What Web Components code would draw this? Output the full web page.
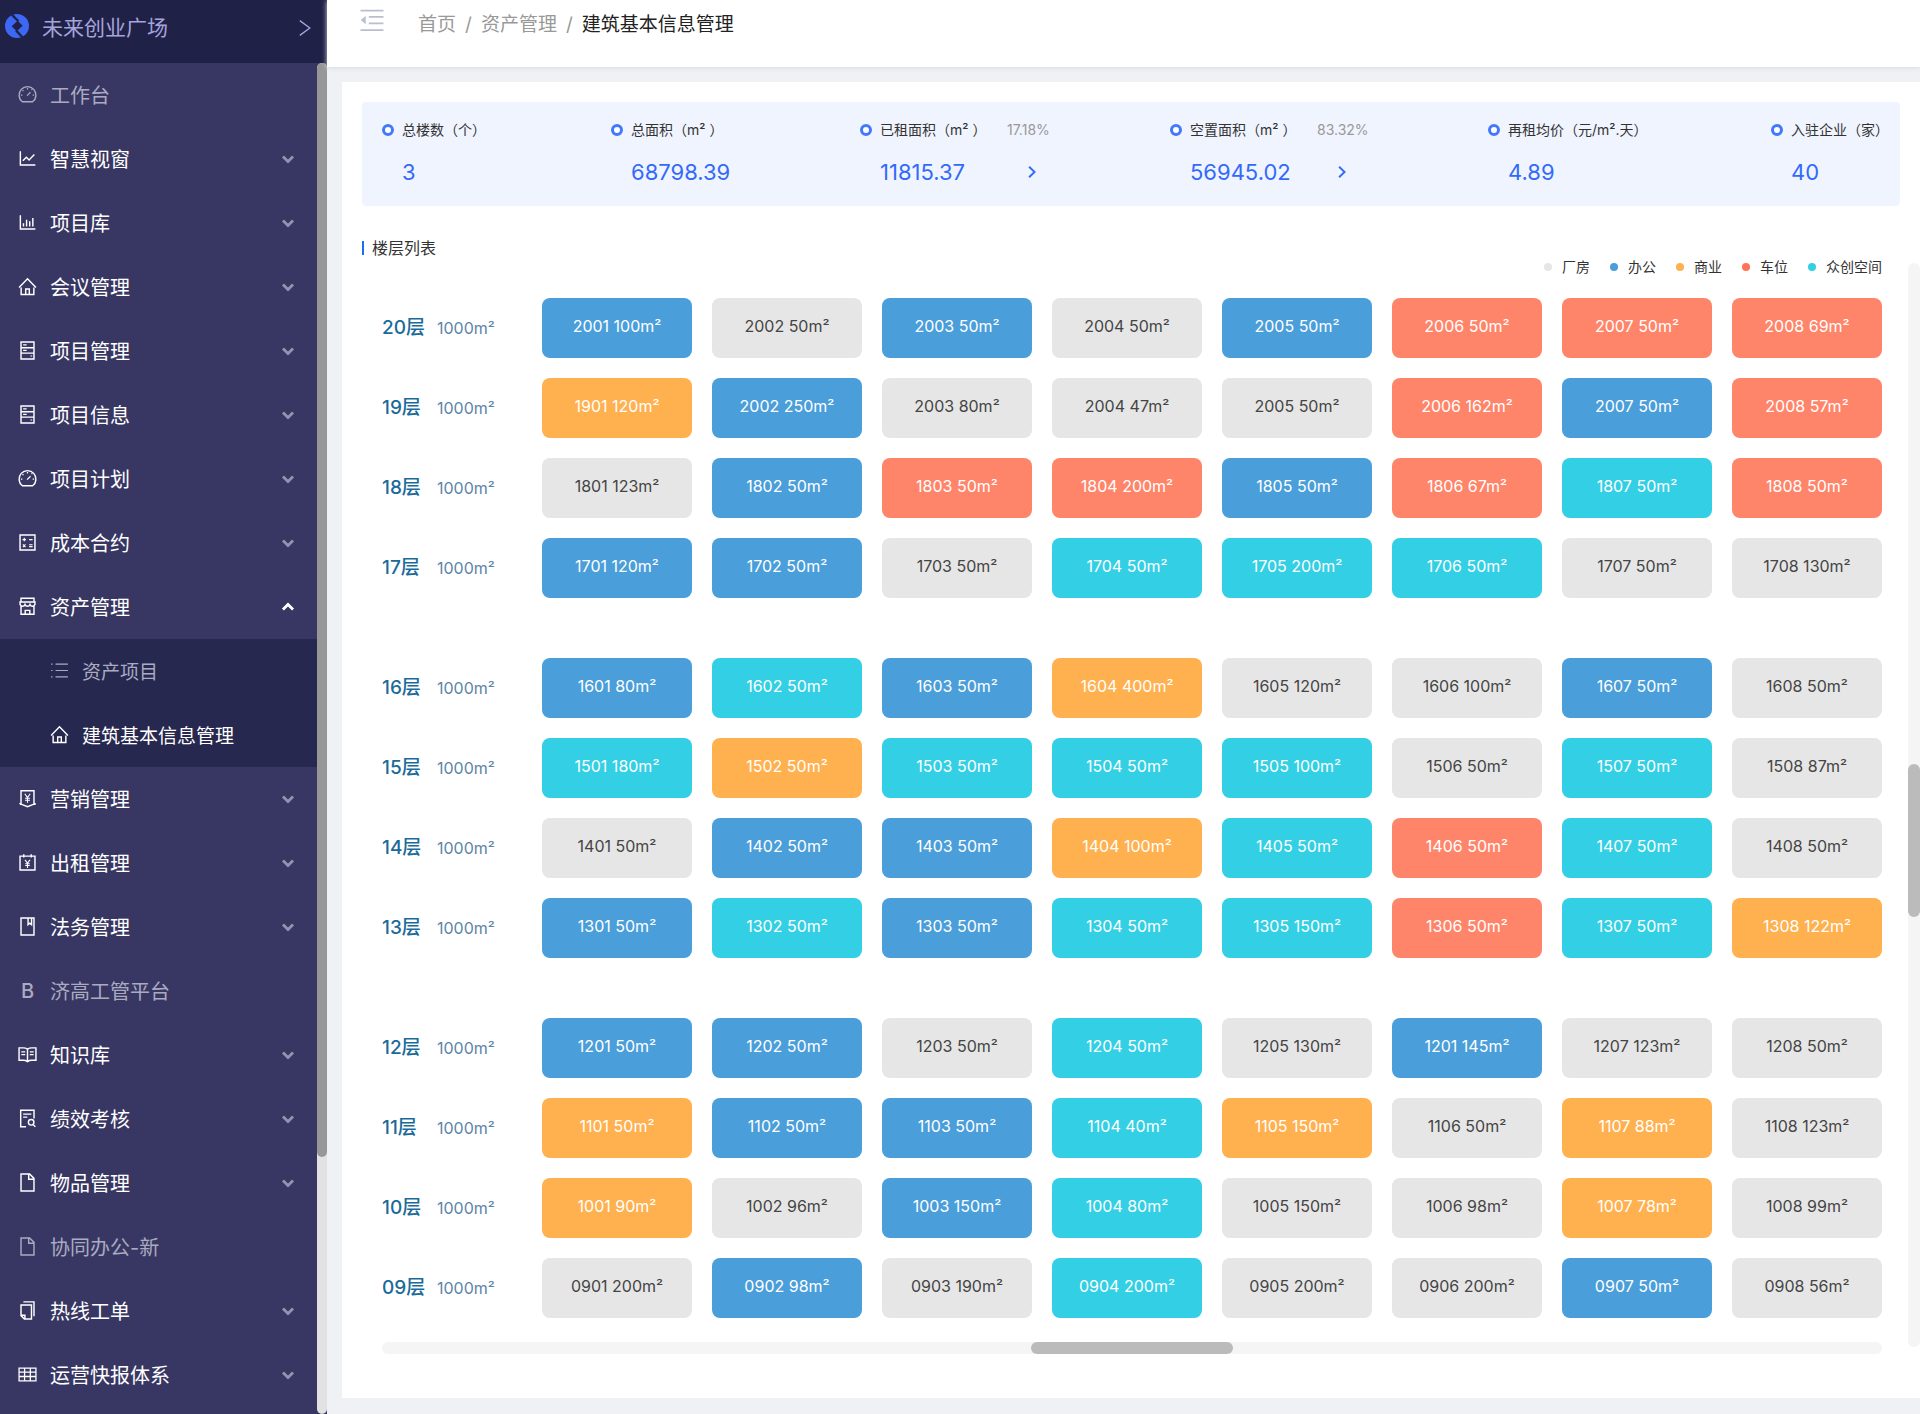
<!DOCTYPE html>
<html lang="zh-CN">
<head>
<meta charset="utf-8">
<title>建筑基本信息管理</title>
<style>
  body {
    margin: 0;
    background: #f0f1f5;
    color: #333;
    font-family: Inter, "Noto Sans CJK SC", sans-serif;
    font-size: 16px;
  }
</style>
</head>
<body>
<asset-app></asset-app>

<script>
// every icon is drawn on a 1024 grid
const ICONS = {
  dashboard: '<path d="M263 868a412 412 0 1 1 498 0z"/><path d="M490 570l170-170M512 200v70M270 300l46 46M190 546h70M764 546h70M708 300l40-40" stroke-width="60"/>',
  line: '<path d="M164 160v668h732M286 618l170-168 132 132 260-260"/>',
  bar: '<path d="M164 160v668h732M316 552v160M468 376v336M620 454v258M772 296v416"/>',
  home: '<path d="M100 560L512 140l412 420M202 560v344h620V560M424 900V636h176v264"/>',
  server: '<path d="M196 100h632v824H196zM196 378h632M196 640h632"/><path d="M300 240h170M300 510h170M660 780h80" stroke-width="60"/>',
  calc: '<path d="M148 148h728v728H148z"/><path d="M270 370h170M355 285v170M590 370h170M285 605l130 130M415 605L285 735M590 625h170M590 715h170" stroke-width="54"/>',
  shop: '<path d="M196 112h632v180H196zM148 292h728v110q-30 100-120 100t-122-90q-30 90-122 90t-122-90q-32 90-122 90t-120-100zM196 500v390h632V500M400 890V700h224v190"/>',
  list: '<path d="M320 200h600M320 512h600M320 824h600M104 200h70M104 512h70M104 824h70" stroke-width="60"/>',
  badge: '<path d="M196 770V130h632v640M148 790h48l316 124 316-124h48V730M148 790v-60"/><path d="M380 280l132 190 132-190M512 470v250M390 500h244M390 600h244" stroke-width="54"/>',
  calendar: '<path d="M148 200h728v676H148zM330 110v160M694 110v160"/><path d="M390 380l122 160 122-160M512 540v240M400 570h224M400 660h224" stroke-width="54"/>',
  book: '<path d="M196 100h632v824H196zM540 100v320l85-70 85 70V100" />',
  read: '<path d="M512 250q-90-60-200-60H100v600h212q110 0 200 66 90-66 200-66h212V190H712q-110 0-200 60zM512 250v600"/><path d="M210 380h190M210 520h190M624 380h190M624 520h190" stroke-width="60"/>',
  search: '<path d="M440 910H180V110h650v400"/><path d="M300 300h400M300 450h200" stroke-width="60"/><circle cx="690" cy="700" r="135"/><path d="M785 800l110 120"/>',
  file: '<path d="M196 100h420l212 212v612H196zM570 110v248h250"/>',
  copy: '<path d="M310 90h518v700M196 240h510v684H360L196 760zM196 740h190v184"/>',
  table: '<path d="M100 200h824v624H100zM100 400h824M100 610h824M370 200v624M650 200v624" stroke-width="62"/>',
  logo: '<circle cx="512" cy="512" r="512" fill="#3c68f5" stroke="none"/><path d="M540 284l214 214-256 242-214-214z" fill="#202147" stroke="none"/><path d="M300 40l270 270M470 700l270 290" stroke="#202147" stroke-width="100"/>',
  fold: '<path d="M0 70h1024M370 350h654M370 640h654M0 940h1024" stroke-width="84"/><path d="M230 310v370L10 495z" fill="currentColor" stroke="none"/>',
  down: '<path d="M80 300l432 420 432-420" stroke-width="240"/>',
  up: '<path d="M80 724l432-420 432 420" stroke-width="240"/>',
  right: '<path d="M300 130l400 382-400 382" stroke-width="140"/>',
  open: '<path d="M180 40l640 472-640 472" stroke-width="84"/>'
};

class AppIcon extends HTMLElement {
  constructor() {
    super();
    this.attachShadow({mode: 'open'});
  }

  connectedCallback() {
    this.shadowRoot.innerHTML = `
      <style>
        :host { display: inline-block; flex: none; width: 21px; height: 21px; }
        svg { display: block; width: 100%; height: 100%; overflow: visible; }
      </style>
      <svg viewBox="0 0 1024 1024" fill="none" stroke="currentColor" stroke-width="70" aria-hidden="true">${ICONS[this.getAttribute('name')]}</svg>`;
  }
}
customElements.define('app-icon', AppIcon);

// <menu-item icon="home" more|open|child|active>
class MenuItem extends HTMLElement {
  constructor() {
    super();
    this.attachShadow({mode: 'open'});
  }

  connectedCallback() {
    const icon = this.getAttribute('icon');
    const group = this.hasAttribute('more') || this.hasAttribute('open');
    const mark = icon === 'B' ? '<b>B</b>' : `<app-icon name="${icon}"></app-icon>`;
    const inner = `${mark}<span><slot></slot></span>`;
    const arrow = `<app-icon class="arrow" name="${this.hasAttribute('open') ? 'up' : 'down'}"></app-icon>`;
    this.shadowRoot.innerHTML = `
      <style>
        :host { display: block; color: #aaabc0; font-size: 20px; }
        :host([more]), :host([open]), :host([active]) { color: #fff; }
        :host([child]) { background: #272850; font-size: 19px; }
        a, button {
          display: flex;
          align-items: center;
          gap: 12px;
          box-sizing: border-box;
          width: 100%;
          height: 64px;
          padding: 0 23px 1px 17px;
          border: 0;
          background: none;
          color: inherit;
          font: inherit;
          text-align: left;
          text-decoration: none;
          cursor: pointer;
        }
        :host([child]) a { padding-left: 49px; }
        span { flex: 1; }
        b { width: 21px; font-weight: 500; text-align: center; }
        .arrow { width: 12px; height: 12px; color: #9293ad; }
        :host([open]) .arrow { color: #fff; }
      </style>
      ${group
        ? `<button type="button" aria-expanded="${this.hasAttribute('open')}">${inner}${arrow}</button>`
        : `<a href="#">${inner}</a>`}`;
  }
}
customElements.define('menu-item', MenuItem);

// before / size / after are the proportions of the track
class ScrollTrack extends HTMLElement {
  constructor() {
    super();
    this.attachShadow({mode: 'open'});
  }

  connectedCallback() {
    const [before, size, after] = this.getAttribute('parts').split(' ');
    this.shadowRoot.innerHTML = `
      <style>
        :host { display: flex; background: var(--track, #f5f5f5); border-radius: 6px; }
        :host([vertical]) { flex-direction: column; }
        .thumb { flex: ${size} 0 0; background: var(--thumb, #bbb); border-radius: 6px; }
        .before { flex: ${before} 0 0; }
        .after { flex: ${after} 0 0; }
      </style>
      <div class="before"></div><div class="thumb"></div><div class="after"></div>`;
  }
}
customElements.define('scroll-track', ScrollTrack);

class SideBar extends HTMLElement {
  constructor() {
    super();
    this.attachShadow({mode: 'open'}).innerHTML = `
      <style>
        :host { display: flex; flex-direction: column; background: #383764; }
        header {
          display: flex;
          align-items: center;
          gap: 13px;
          box-sizing: border-box;
          height: 63px;
          padding: 0 14px 12px 5px;
          background: #202147;
          color: #a6a4dc;
          font-size: 21px;
        }
        header app-icon { width: 24px; height: 24px; }
        header span { flex: 1; }
        header button { display: flex; padding: 5px 0 0; border: 0; background: none; color: inherit; }
        header button app-icon { width: 16px; height: 16px; }
        .body { display: flex; flex: 1; }
        nav { flex: 1; }
        scroll-track { width: 10px; --track: #e2e2e2; --thumb: #979797; }
      </style>
      <header>
        <app-icon name="logo"></app-icon>
        <span>未来创业广场</span>
        <button type="button" aria-label="切换"><app-icon name="open"></app-icon></button>
      </header>
      <div class="body">
        <nav><slot></slot></nav>
        <scroll-track vertical parts="0 1094 257"></scroll-track>
      </div>`;
  }
}
customElements.define('side-bar', SideBar);

class TopBar extends HTMLElement {
  constructor() {
    super();
    this.attachShadow({mode: 'open'}).innerHTML = `
      <style>
        :host {
          display: flex;
          align-items: flex-start;
          gap: 34px;
          box-sizing: border-box;
          height: 67px;
          padding: 9px 33px 0;
          background: #fff;
          box-shadow: 0 1px 5px #d5dbe2;
        }
        button { padding: 0; border: 0; background: none; color: #b9bfce; }
        button app-icon { display: block; width: 24px; height: 23px; }
        nav { display: flex; gap: 9px; color: #999; font-size: 19px; line-height: 32px; }
        a { color: inherit; text-decoration: none; }
        .current { color: #222; }
      </style>
      <button type="button" aria-label="收起菜单"><app-icon name="fold"></app-icon></button>
      <nav>
        <a href="#">首页</a><span>/</span>
        <a href="#">资产管理</a><span>/</span>
        <a class="current" href="#">建筑基本信息管理</a>
      </nav>`;
  }
}
customElements.define('top-bar', TopBar);

class StatItem extends HTMLElement {
  constructor() {
    super();
    this.attachShadow({mode: 'open'});
  }

  connectedCallback() {
    const rate = this.getAttribute('rate');
    this.shadowRoot.innerHTML = `
      <style>
        :host {
          display: grid;
          grid-template-columns: 12px auto 1fr;
          column-gap: 8px;
          align-items: center;
          white-space: nowrap;
        }
        i { box-sizing: border-box; width: 12px; height: 12px; border: 3px solid #4278fb; border-radius: 50%; background: #fff; }
        .label, .rate { font-size: 14px; line-height: 20px; }
        :host([rate]) .label { width: 119px; }
        .rate { color: #999; }
        .value { grid-column: 2; margin-top: 16px; color: #346af8; font-size: 22px; line-height: 32px; }
        button { display: flex; margin: 16px 0 0 18px; padding: 0; border: 0; background: none; color: #346af8; }
        button app-icon { width: 14px; height: 14px; }
      </style>
      <i></i>
      <span class="label"><slot></slot></span>
      <span class="rate">${rate || ''}</span>
      <span class="value">${this.getAttribute('value')}</span>
      ${rate ? '<button type="button" aria-label="详情"><app-icon name="right"></app-icon></button>' : ''}`;
  }
}
customElements.define('stat-item', StatItem);

class TypeLegend extends HTMLElement {
  constructor() {
    super();
    this.attachShadow({mode: 'open'}).innerHTML = `
      <style>
        :host { display: block; }
        ul { display: flex; justify-content: flex-end; gap: 20px; margin: 0; padding: 0; list-style: none; font-size: 14px; line-height: 18px; }
        li { display: flex; align-items: center; gap: 10px; }
        li::before { content: ""; width: 8px; height: 8px; border-radius: 50%; background: var(--dot); }
      </style>
      <ul>
        <li style="--dot: #e6e6e6">厂房</li>
        <li style="--dot: #4a9eda">办公</li>
        <li style="--dot: #ffb04f">商业</li>
        <li style="--dot: #ff7456">车位</li>
        <li style="--dot: #33cfe5">众创空间</li>
      </ul>`;
  }
}
customElements.define('type-legend', TypeLegend);

class RoomTile extends HTMLElement {
  constructor() {
    super();
    this.attachShadow({mode: 'open'}).innerHTML = `
      <style>
        :host {
          display: block;
          padding-bottom: 4px;
          border-radius: 8px;
          background: #e6e6e6;
          color: #444;
          line-height: 56px;
          text-align: center;
          white-space: nowrap;
        }
        :host([type=b]) { background: #4a9eda; color: #fff; }
        :host([type=o]) { background: #ffb04f; color: #fff; }
        :host([type=r]) { background: #ff856a; color: #fff; }
        :host([type=c]) { background: #33cfe5; color: #fff; }
      </style>
      <slot></slot>`;
  }
}
customElements.define('room-tile', RoomTile);

class FloorRow extends HTMLElement {
  constructor() {
    super();
    this.attachShadow({mode: 'open'});
  }

  connectedCallback() {
    // rooms="b 2001 100, g 2002 50, ..."
    const rooms = this.getAttribute('rooms').split(', ').map(room => {
      const [type, number, area] = room.split(' ');
      return `<room-tile type="${type}">${number} ${area}m²</room-tile>`;
    });
    this.shadowRoot.innerHTML = `
      <style>
        :host { display: grid; grid-template-columns: 140px repeat(8, minmax(0, 1fr)); column-gap: 20px; }
        .floor { display: grid; grid-template-columns: 55px 1fr; align-items: baseline; line-height: 60px; }
        strong { color: #1a6a9a; font-size: 19px; font-weight: 500; }
        span { color: #5d84a6; }
      </style>
      <div class="floor"><strong>${this.getAttribute('floor')}层</strong><span>1000m²</span></div>
      ${rooms.join('')}`;
  }
}
customElements.define('floor-row', FloorRow);

const FLOORS = [
  [
    ['20', 'b 2001 100, g 2002 50, b 2003 50, g 2004 50, b 2005 50, r 2006 50, r 2007 50, r 2008 69'],
    ['19', 'o 1901 120, b 2002 250, g 2003 80, g 2004 47, g 2005 50, r 2006 162, b 2007 50, r 2008 57'],
    ['18', 'g 1801 123, b 1802 50, r 1803 50, r 1804 200, b 1805 50, r 1806 67, c 1807 50, r 1808 50'],
    ['17', 'b 1701 120, b 1702 50, g 1703 50, c 1704 50, c 1705 200, c 1706 50, g 1707 50, g 1708 130']
  ],
  [
    ['16', 'b 1601 80, c 1602 50, b 1603 50, o 1604 400, g 1605 120, g 1606 100, b 1607 50, g 1608 50'],
    ['15', 'c 1501 180, o 1502 50, c 1503 50, c 1504 50, c 1505 100, g 1506 50, c 1507 50, g 1508 87'],
    ['14', 'g 1401 50, b 1402 50, b 1403 50, o 1404 100, c 1405 50, r 1406 50, c 1407 50, g 1408 50'],
    ['13', 'b 1301 50, c 1302 50, b 1303 50, c 1304 50, c 1305 150, r 1306 50, c 1307 50, o 1308 122']
  ],
  [
    ['12', 'b 1201 50, b 1202 50, g 1203 50, c 1204 50, g 1205 130, b 1201 145, g 1207 123, g 1208 50'],
    ['11', 'o 1101 50, b 1102 50, b 1103 50, c 1104 40, o 1105 150, g 1106 50, o 1107 88, g 1108 123'],
    ['10', 'o 1001 90, g 1002 96, b 1003 150, c 1004 80, g 1005 150, g 1006 98, o 1007 78, g 1008 99'],
    ['09', 'g 0901 200, b 0902 98, g 0903 190, c 0904 200, g 0905 200, g 0906 200, b 0907 50, g 0908 56']
  ]
];

class FloorList extends HTMLElement {
  constructor() {
    super();
    this.attachShadow({mode: 'open'}).innerHTML = `
      <style>
        :host { display: grid; gap: 60px; }
        section { display: grid; gap: 20px; }
      </style>
      ${FLOORS.map(group => `<section>${group.map(([floor, rooms]) =>
        `<floor-row floor="${floor}" rooms="${rooms}"></floor-row>`).join('')}</section>`).join('')}`;
  }
}
customElements.define('floor-list', FloorList);

class AssetApp extends HTMLElement {
  constructor() {
    super();
    this.attachShadow({mode: 'open'}).innerHTML = `
      <style>
        :host { display: grid; grid-template-columns: 327px minmax(0, 1fr); min-height: 100vh; }
        main { margin: 15px 0 16px 15px; padding: 20px 0 44px 20px; background: #fff; }
        .stats {
          display: grid;
          grid-template-columns: 229fr 249fr 310fr 318fr 283fr 127fr;
          align-items: start;
          margin-right: 20px;
          padding: 18px 2px 18px 20px;
          border-radius: 4px;
          background: #f0f4ff;
        }
        h2 { display: flex; align-items: center; gap: 8px; margin: 32px 0 0; font-size: 16px; font-weight: 400; line-height: 20px; }
        h2::before { content: ""; width: 2px; height: 14px; background: #1a6cf5; }
        .floors { display: flex; gap: 26px; padding-left: 20px; }
        .area { flex: 1; min-width: 0; }
        floor-list { margin: 22px 0 24px; }
        .area scroll-track { height: 12px; }
        .floors > scroll-track { width: 12px; margin: 5px 0 7px; }
      </style>
      <side-bar>
        <menu-item icon="dashboard">工作台</menu-item>
        <menu-item icon="line" more>智慧视窗</menu-item>
        <menu-item icon="bar" more>项目库</menu-item>
        <menu-item icon="home" more>会议管理</menu-item>
        <menu-item icon="server" more>项目管理</menu-item>
        <menu-item icon="server" more>项目信息</menu-item>
        <menu-item icon="dashboard" more>项目计划</menu-item>
        <menu-item icon="calc" more>成本合约</menu-item>
        <menu-item icon="shop" open>资产管理</menu-item>
        <menu-item icon="list" child>资产项目</menu-item>
        <menu-item icon="home" child active>建筑基本信息管理</menu-item>
        <menu-item icon="badge" more>营销管理</menu-item>
        <menu-item icon="calendar" more>出租管理</menu-item>
        <menu-item icon="book" more>法务管理</menu-item>
        <menu-item icon="B">济高工管平台</menu-item>
        <menu-item icon="read" more>知识库</menu-item>
        <menu-item icon="search" more>绩效考核</menu-item>
        <menu-item icon="file" more>物品管理</menu-item>
        <menu-item icon="file">协同办公-新</menu-item>
        <menu-item icon="copy" more>热线工单</menu-item>
        <menu-item icon="table" more>运营快报体系</menu-item>
      </side-bar>
      <div>
        <top-bar></top-bar>
        <main>
          <div class="stats">
            <stat-item value="3">总楼数（个）</stat-item>
            <stat-item value="68798.39">总面积（m² ）</stat-item>
            <stat-item value="11815.37" rate="17.18%">已租面积（m² ）</stat-item>
            <stat-item value="56945.02" rate="83.32%">空置面积（m² ）</stat-item>
            <stat-item value="4.89">再租均价（元/m².天）</stat-item>
            <stat-item value="40">入驻企业（家）</stat-item>
          </div>
          <h2>楼层列表</h2>
          <div class="floors">
            <div class="area">
              <type-legend></type-legend>
              <floor-list></floor-list>
              <scroll-track parts="649 202 649"></scroll-track>
            </div>
            <scroll-track vertical parts="501 153 430"></scroll-track>
          </div>
        </main>
      </div>`;
  }
}
customElements.define('asset-app', AssetApp);
</script>
</body>
</html>
